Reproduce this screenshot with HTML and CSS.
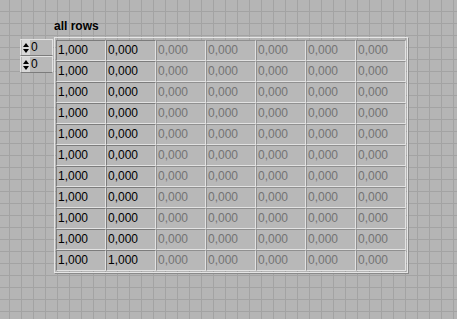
FILE: index.html
```html
<!DOCTYPE html>
<html lang="en">
<head>
    <meta charset="UTF-8">
    <title>all rows</title>
    <link rel="stylesheet" href="styles.css">
</head>
<body>
    <div class="panel">
        <div class="indexes">
            <div class="index"><span class="spin"><i class="up"></i><i class="down"></i></span><span class="idx-val">0</span></div>
            <div class="index"><span class="spin"><i class="up"></i><i class="down"></i></span><span class="idx-val">0</span></div>
        </div>
        <div class="array-block">
            <div class="label">all rows</div>
            <div class="frame">
                <div class="grid">
                    <div class="cell">1,000</div><div class="cell">0,000</div><div class="cell off">0,000</div><div class="cell off">0,000</div><div class="cell off">0,000</div><div class="cell off">0,000</div><div class="cell off">0,000</div>
                    <div class="cell">1,000</div><div class="cell">0,000</div><div class="cell off">0,000</div><div class="cell off">0,000</div><div class="cell off">0,000</div><div class="cell off">0,000</div><div class="cell off">0,000</div>
                    <div class="cell">1,000</div><div class="cell">0,000</div><div class="cell off">0,000</div><div class="cell off">0,000</div><div class="cell off">0,000</div><div class="cell off">0,000</div><div class="cell off">0,000</div>
                    <div class="cell">1,000</div><div class="cell">0,000</div><div class="cell off">0,000</div><div class="cell off">0,000</div><div class="cell off">0,000</div><div class="cell off">0,000</div><div class="cell off">0,000</div>
                    <div class="cell">1,000</div><div class="cell">0,000</div><div class="cell off">0,000</div><div class="cell off">0,000</div><div class="cell off">0,000</div><div class="cell off">0,000</div><div class="cell off">0,000</div>
                    <div class="cell">1,000</div><div class="cell">0,000</div><div class="cell off">0,000</div><div class="cell off">0,000</div><div class="cell off">0,000</div><div class="cell off">0,000</div><div class="cell off">0,000</div>
                    <div class="cell">1,000</div><div class="cell">0,000</div><div class="cell off">0,000</div><div class="cell off">0,000</div><div class="cell off">0,000</div><div class="cell off">0,000</div><div class="cell off">0,000</div>
                    <div class="cell">1,000</div><div class="cell">0,000</div><div class="cell off">0,000</div><div class="cell off">0,000</div><div class="cell off">0,000</div><div class="cell off">0,000</div><div class="cell off">0,000</div>
                    <div class="cell">1,000</div><div class="cell">0,000</div><div class="cell off">0,000</div><div class="cell off">0,000</div><div class="cell off">0,000</div><div class="cell off">0,000</div><div class="cell off">0,000</div>
                    <div class="cell">1,000</div><div class="cell">0,000</div><div class="cell off">0,000</div><div class="cell off">0,000</div><div class="cell off">0,000</div><div class="cell off">0,000</div><div class="cell off">0,000</div>
                    <div class="cell">1,000</div><div class="cell">1,000</div><div class="cell off">0,000</div><div class="cell off">0,000</div><div class="cell off">0,000</div><div class="cell off">0,000</div><div class="cell off">0,000</div>
                </div>
            </div>
        </div>
    </div>
</body>
</html>
```

FILE: styles.css
```css
html, body {
    height: 100%;
}
body {
    margin: 0;
    font-family: "Liberation Sans", Arial, sans-serif;
    font-size: 12px;
    color: #000;
    background-color: #b5b5b5;
    background-image:
        linear-gradient(to right, #a3a3a3 1px, transparent 1px),
        linear-gradient(to bottom, #a3a3a3 1px, transparent 1px);
    background-size: 12px 12px;
    background-position: 9px 11px;
}
.panel {
    display: flex;
    align-items: flex-start;
    padding: 19px 0 0 20px;
}
.indexes {
    margin-top: 20px;
    width: 33px;
    display: flex;
    flex-direction: column;
}
.index {
    height: 15px;
    display: flex;
    align-items: center;
    background: #b8b8b8;
    border-top: 1px solid #e2e2e2;
    border-left: 1px solid #e2e2e2;
    border-right: 1px solid #e2e2e2;
    border-bottom: 1px solid #7c7c7c;
}
.spin {
    width: 8px;
    height: 15px;
    margin-left: 1px;
    background: #d8d8d8;
    display: flex;
    flex-direction: column;
    justify-content: center;
    align-items: center;
    gap: 2px;
}
.spin i {
    display: block;
    width: 0;
    height: 0;
    border-left: 3px solid transparent;
    border-right: 3px solid transparent;
}
.spin .up {
    border-bottom: 4px solid #000;
}
.spin .down {
    border-top: 4px solid #000;
}
.idx-val {
    margin-left: 1px;
    line-height: 15px;
}
.array-block {
    margin-left: 1px;
}
.label {
    font-weight: bold;
    line-height: 14px;
    height: 14px;
}
.frame {
    margin-top: 4px;
    padding: 2px 1px 1px 1px;
    border: 1px solid #e6e6e6;
    box-shadow: 1px 1px 0 #8a8a8a;
}
.grid {
    display: grid;
    grid-template-columns: repeat(7, 50px);
    grid-auto-rows: 21px;
}
.cell {
    line-height: 19px;
    padding-left: 1px;
    background: #b8b8b8;
    border-top: 1px solid #7c7c7c;
    border-left: 1px solid #7c7c7c;
    border-right: 1px solid #e2e2e2;
    border-bottom: 1px solid #e2e2e2;
}
.cell.off {
    color: #737373;
    border-top-color: #909090;
    border-left-color: #909090;
}
```
